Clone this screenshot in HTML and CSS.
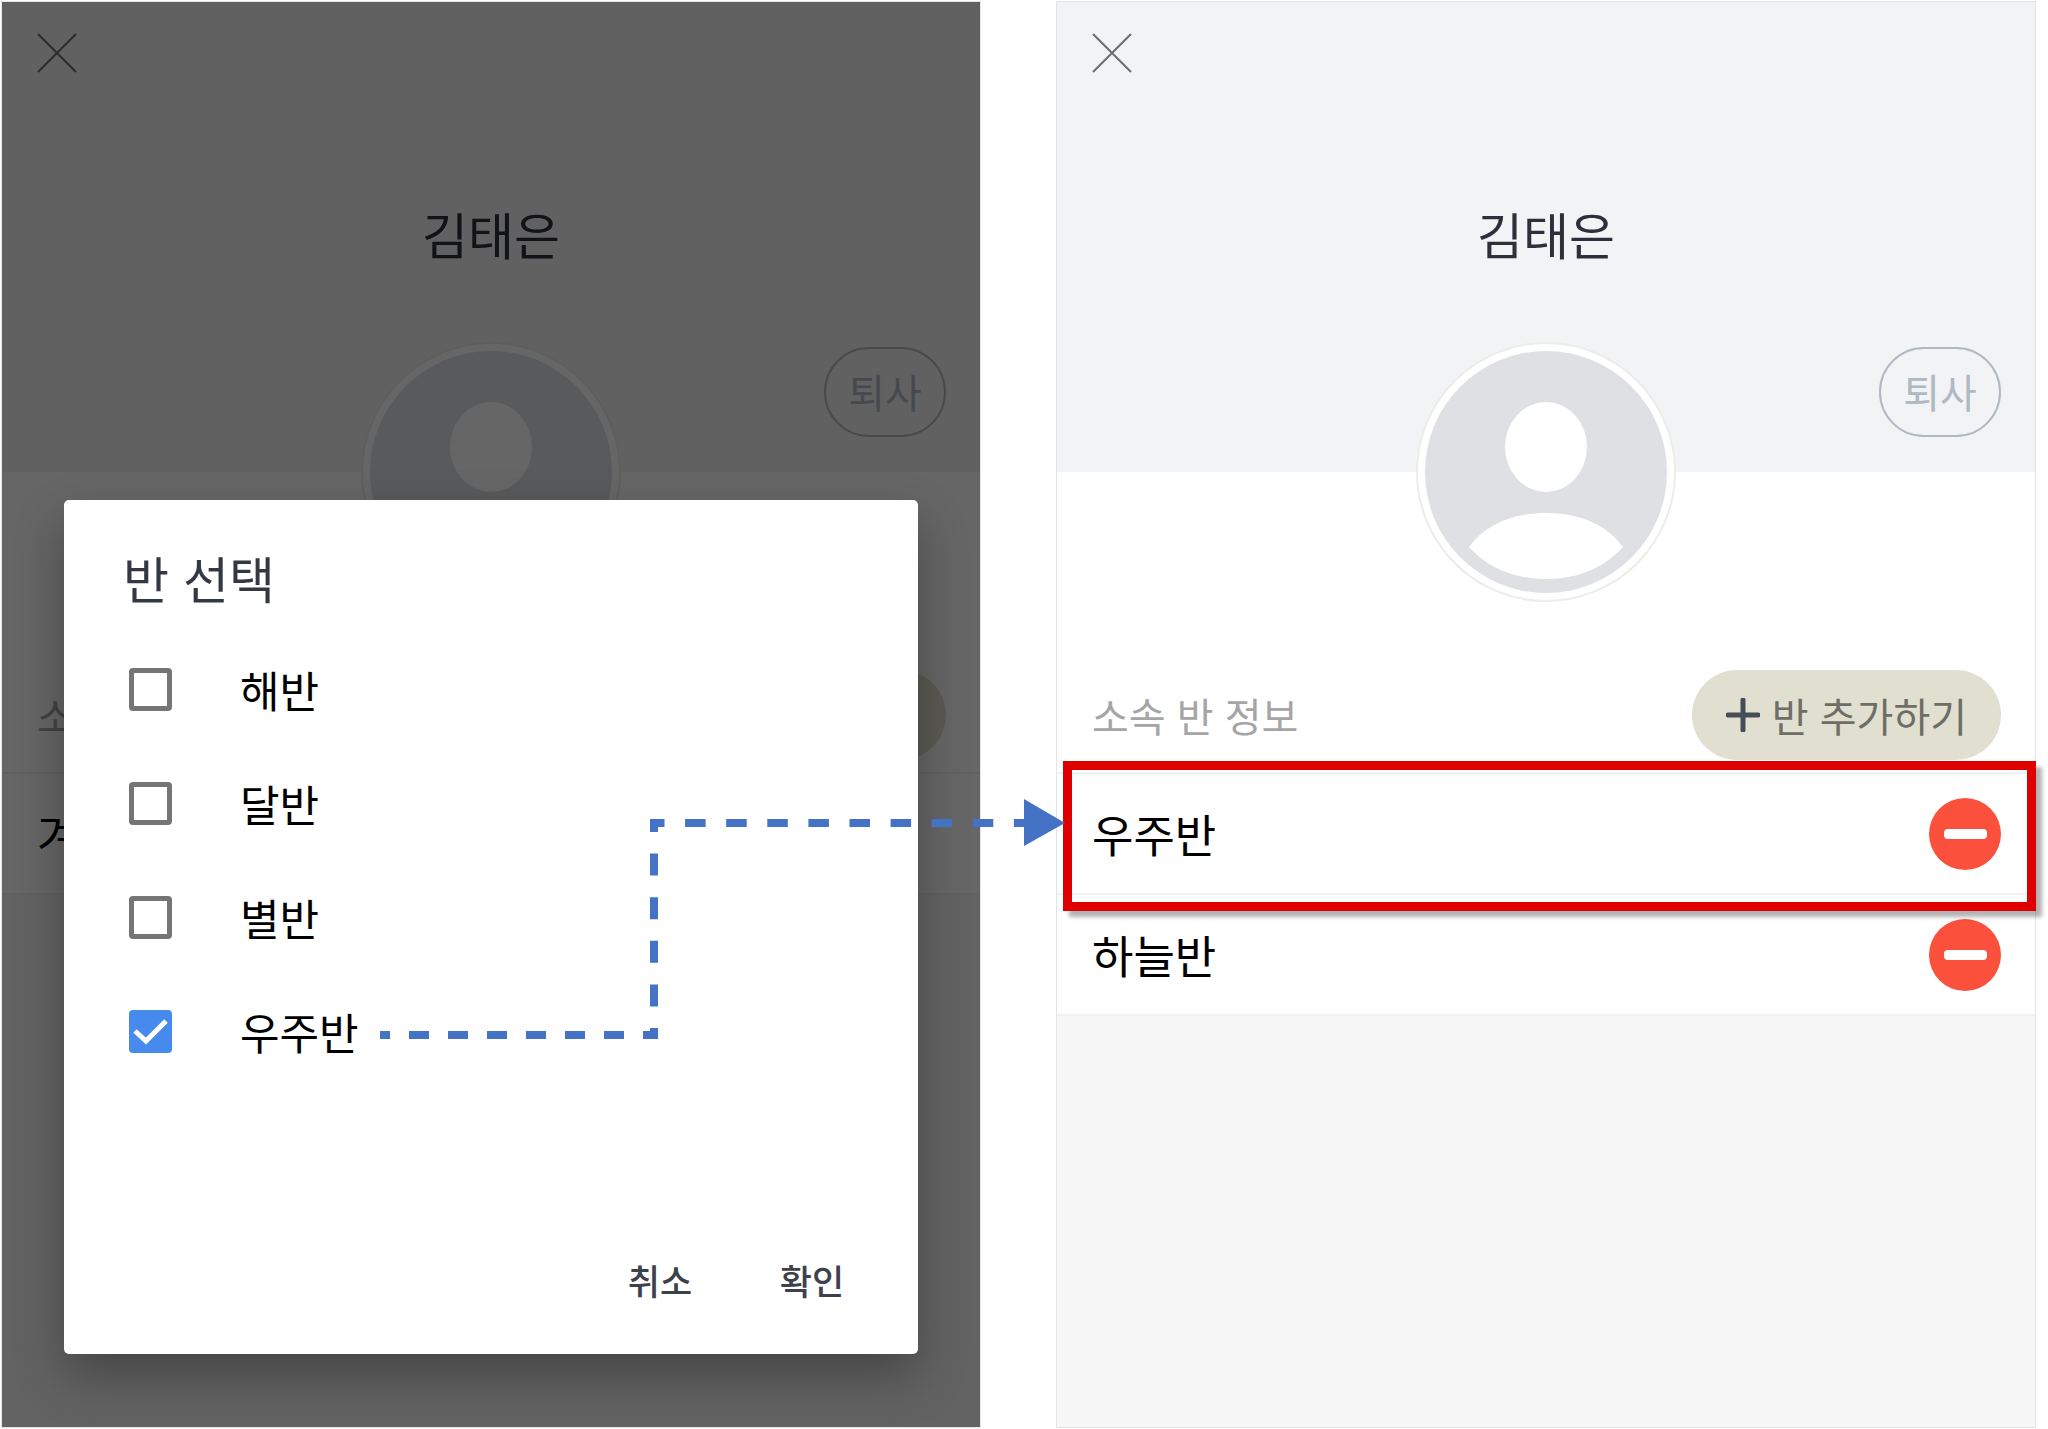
FILE: index.html
```html
<!DOCTYPE html>
<html lang="ko">
<head>
    <meta charset="UTF-8">
    <meta name="viewport" content="width=device-width, initial-scale=1">
    <title>반 선택</title>
    <link rel="stylesheet" href="styles.css">
</head>
<body>
    <main class="page">
        <section class="screen">
            <header class="profile">
                <button type="button" class="close" aria-label="닫기">
                    <svg width="40" height="40" viewBox="0 0 40 40"><path d="M1 1L39 39M39 1L1 39"/></svg>
                </button>
                <h1 class="name">김태은</h1>
                <button type="button" class="leave">퇴사</button>
                <svg class="avatar" viewBox="0 0 260 260">
                    <circle class="avatar-ring" cx="130" cy="130" r="129"/>
                    <circle class="avatar-bg" cx="130" cy="130" r="121"/>
                    <ellipse class="avatar-body" cx="130" cy="105" rx="41" ry="45"/>
                    <path class="avatar-body" d="M53 205C69 183 96 171 130 171C164 171 191 183 207 205C187 227 160 237 130 237C100 237 73 227 53 205Z"/>
                </svg>
            </header>
            <div class="section-head">
                <h2 class="section-title">소속 반 정보</h2>
                <button type="button" class="add">
                    <svg width="34" height="34" viewBox="0 0 34 34"><path d="M17 2V32M2 17H32"/></svg>
                    반 추가하기
                </button>
            </div>
            <ul class="class-list">
                <li class="class-row">겨울반</li>
            </ul>

            <div class="overlay">
                <form class="modal" role="dialog" aria-labelledby="modalTitle">
                    <h2 class="modal-title" id="modalTitle">반 선택</h2>
                    <div class="option">
                        <input type="checkbox" class="check" id="class1">
                        <label for="class1">해반</label>
                    </div>
                    <div class="option">
                        <input type="checkbox" class="check" id="class2">
                        <label for="class2">달반</label>
                    </div>
                    <div class="option">
                        <input type="checkbox" class="check" id="class3">
                        <label for="class3">별반</label>
                    </div>
                    <div class="option">
                        <span class="check-box">
                            <input type="checkbox" class="check" id="class4" checked>
                            <svg class="tick" viewBox="0 0 43 43"><path d="M6 21L17 31L37 11"/></svg>
                        </span>
                        <label for="class4">우주반</label>
                    </div>
                    <div class="modal-actions">
                        <button type="button" class="action">취소</button>
                        <button type="button" class="action">확인</button>
                    </div>
                </form>
            </div>
        </section>

        <section class="screen">
            <header class="profile">
                <button type="button" class="close" aria-label="닫기">
                    <svg width="40" height="40" viewBox="0 0 40 40"><path d="M1 1L39 39M39 1L1 39"/></svg>
                </button>
                <h1 class="name">김태은</h1>
                <button type="button" class="leave">퇴사</button>
                <svg class="avatar" viewBox="0 0 260 260">
                    <circle class="avatar-ring" cx="130" cy="130" r="129"/>
                    <circle class="avatar-bg" cx="130" cy="130" r="121"/>
                    <ellipse class="avatar-body" cx="130" cy="105" rx="41" ry="45"/>
                    <path class="avatar-body" d="M53 205C69 183 96 171 130 171C164 171 191 183 207 205C187 227 160 237 130 237C100 237 73 227 53 205Z"/>
                </svg>
            </header>
            <div class="section-head">
                <h2 class="section-title">소속 반 정보</h2>
                <button type="button" class="add">
                    <svg width="34" height="34" viewBox="0 0 34 34"><path d="M17 2V32M2 17H32"/></svg>
                    반 추가하기
                </button>
            </div>
            <ul class="class-list">
                <li class="class-row highlight">
                    우주반
                    <button type="button" class="remove" aria-label="우주반 삭제"></button>
                </li>
                <li class="class-row">
                    하늘반
                    <button type="button" class="remove" aria-label="하늘반 삭제"></button>
                </li>
            </ul>
        </section>

        <!-- arrow from the ticked class to its new row -->
        <svg class="arrow" width="686" height="248" viewBox="0 0 686 248">
            <path class="arrow-line" stroke-dasharray="20 19" stroke-dashoffset="10" d="M0 236H278"/>
            <path class="arrow-line" stroke-dasharray="22 21.6" stroke-dashoffset="9" d="M274 20V240"/>
            <path class="arrow-line" stroke-dasharray="20.5 20.6" stroke-dashoffset="6" d="M270 24H650"/>
            <path class="arrow-head" d="M644 0L685 24L644 47Z"/>
        </svg>
    </main>
</body>
</html>
```

FILE: styles.css
```css
* {
    box-sizing: border-box;
}
body {
    margin: 0;
    background-color: #fff;
    color: #000;
    font-family: "Noto Sans CJK KR", "Noto Sans", sans-serif;
}
h1, h2, ul {
    margin: 0;
    padding: 0;
    font-weight: 400;
    list-style: none;
}
button {
    margin: 0;
    padding: 0;
    border: 0;
    background: none;
    font-family: inherit;
    cursor: pointer;
}
.page {
    position: relative;
    display: flex;
    gap: 75px;
    min-height: 100vh;
    padding: 1px 12px 1px 1px;
}
.screen {
    position: relative;
    display: flex;
    flex: 1;
    flex-direction: column;
    border: 1px solid #e2e4e6;
    background-color: #f7f7f7;
}

/* profile header */
.profile {
    position: relative;
    display: flex;
    flex-direction: column;
    height: 470px;
    padding: 31px 34px 35px;
    background-color: #f2f3f5;
}
.close {
    width: 42px;
    height: 40px;
    line-height: 0;
}
.close path {
    fill: none;
    stroke: #6b6d70;
    stroke-width: 2;
}
.name {
    margin-top: 122px;
    color: #2b303b;
    font-size: 50px;
    line-height: 76px;
    text-align: center;
}
.leave {
    align-self: flex-end;
    width: 122px;
    height: 90px;
    margin-top: auto;
    padding-bottom: 2px;
    border: 2px solid #b0b8c1;
    border-radius: 45px;
    color: #b0b8c1;
    font-size: 40px;
    line-height: 60px;
}
.avatar {
    position: absolute;
    bottom: -130px;
    left: 50%;
    width: 260px;
    height: 260px;
    transform: translateX(-50%);
}
.avatar-ring {
    fill: #fff;
    stroke: #ecece8;
    stroke-width: 2;
}
.avatar-bg {
    fill: #dfe0e4;
}
.avatar-body {
    fill: #fff;
}

/* class list */
.section-head {
    display: flex;
    align-items: center;
    justify-content: space-between;
    padding: 198px 34px 12px 35px;
    border-bottom: 2px solid #f2f2f2;
    background-color: #fff;
}
.section-title {
    color: #a5a5a5;
    font-size: 40px;
    line-height: 60px;
}
.add {
    display: flex;
    align-items: center;
    gap: 12px;
    height: 90px;
    padding: 0 34px;
    border-radius: 45px;
    background-color: #e0dfd0;
    color: #6e6d66;
    font-size: 40px;
    line-height: 60px;
}
.add path {
    fill: none;
    stroke: #474c59;
    stroke-width: 5;
    stroke-linecap: round;
}
.class-row {
    position: relative;
    display: flex;
    align-items: center;
    justify-content: space-between;
    height: 121px;
    padding: 0 34px 0 35px;
    border-bottom: 2px solid #f2f2f2;
    background-color: #fff;
    font-size: 45px;
    line-height: 66px;
}
.highlight::after {
    content: "";
    position: absolute;
    z-index: 1;
    top: -13px;
    right: -1px;
    bottom: -18px;
    left: 6px;
    border: 9px solid #de0000;
    box-shadow: 6px 6px 4px rgba(0, 0, 0, 0.3);
    pointer-events: none;
}
.remove {
    display: flex;
    align-items: center;
    justify-content: center;
    width: 72px;
    height: 72px;
    border-radius: 50%;
    background-color: #fb503b;
}
.remove::before {
    content: "";
    width: 43px;
    height: 10px;
    border-radius: 4px;
    background-color: #fff;
}

/* class picker */
.overlay {
    position: absolute;
    inset: 0;
    padding: 498px 62px 0;
    background-color: rgba(0, 0, 0, 0.6);
    overflow: hidden;
}
.modal {
    display: flex;
    flex-direction: column;
    aspect-ratio: 1;
    padding: 39px 50px 38px 59px;
    border-radius: 5px;
    background-color: #fff;
    box-shadow: 0 22px 50px rgba(0, 0, 0, 0.3);
}
.modal-title {
    margin-bottom: 17px;
    color: #343842;
    font-size: 50px;
    line-height: 76px;
}
.option {
    display: flex;
    align-items: center;
    gap: 68px;
    height: 114px;
    padding-left: 6px;
    font-size: 43px;
    line-height: 64px;
}
.check-box {
    position: relative;
    display: flex;
}
.check {
    appearance: none;
    width: 43px;
    height: 43px;
    margin: 0;
    border: 5px solid #757575;
    border-radius: 4px;
    background-color: #fff;
}
.check:checked {
    border-color: #468aee;
    background-color: #468aee;
}
.tick {
    position: absolute;
    inset: 0;
    pointer-events: none;
}
.tick path {
    fill: none;
    stroke: #fff;
    stroke-width: 5;
}
.modal-actions {
    display: flex;
    justify-content: flex-end;
    margin-top: auto;
    gap: 40px;
}
.action {
    width: 112px;
    height: 72px;
    color: #3d414b;
    font-size: 35px;
    font-weight: 500;
    line-height: 52px;
}

.arrow {
    position: absolute;
    top: 799px;
    left: 380px;
    z-index: 2;
    pointer-events: none;
}
.arrow-line {
    fill: none;
    stroke: #4472c4;
    stroke-width: 8;
}
.arrow-head {
    fill: #4472c4;
}
```
